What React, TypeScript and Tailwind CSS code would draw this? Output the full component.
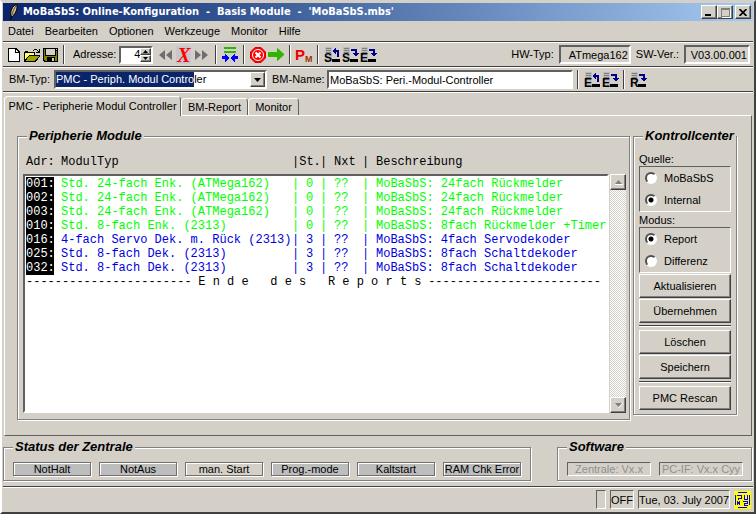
import React from 'react';

interface ModuleRow {
  adr: string;
  typ: string;
  status: string;
  next: string;
  text: string;
  color: string;
}

const GREEN = 'text-[#00ff00]';
const BLUE = 'text-[#0000e0]';

const modules: ModuleRow[] = [
  { adr: '001:', typ: 'Std. 24-fach Enk. (ATMega162)', status: '0', next: '??', text: 'MoBaSbS: 24fach Rückmelder', color: GREEN },
  { adr: '002:', typ: 'Std. 24-fach Enk. (ATMega162)', status: '0', next: '??', text: 'MoBaSbS: 24fach Rückmelder', color: GREEN },
  { adr: '003:', typ: 'Std. 24-fach Enk. (ATMega162)', status: '0', next: '??', text: 'MoBaSbS: 24fach Rückmelder', color: GREEN },
  { adr: '010:', typ: 'Std. 8-fach Enk. (2313)', status: '0', next: '??', text: 'MoBaSbS: 8fach Rückmelder +Timer', color: GREEN },
  { adr: '016:', typ: '4-fach Servo Dek. m. Rück (2313)', status: '3', next: '??', text: 'MoBaSbS: 4fach Servodekoder', color: BLUE },
  { adr: '025:', typ: 'Std. 8-fach Dek. (2313)', status: '3', next: '??', text: 'MoBaSbS: 8fach Schaltdekoder', color: BLUE },
  { adr: '032:', typ: 'Std. 8-fach Dek. (2313)', status: '3', next: '??', text: 'MoBaSbS: 8fach Schaltdekoder', color: BLUE },
];

const menus = ['Datei', 'Bearbeiten', 'Optionen', 'Werkzeuge', 'Monitor', 'Hilfe'];

const sunken = 'border border-t-[#606060] border-l-[#606060] border-r-white border-b-white';
const sunkenDeep = 'border-2 border-t-[#606060] border-l-[#606060] border-r-white border-b-white';
const raised = 'border border-t-white border-l-white border-r-[#404040] border-b-[#404040] shadow-[inset_-1px_-1px_0_#808080] bg-[#d4d0c8]';
const etched = 'border border-[#808080] shadow-[1px_1px_0_#fff,inset_1px_1px_0_#fff]';

const Rule = () => <div className="h-[2px] shrink-0 border-b border-white bg-[#404040]" />;
const Divider = ({ className = '' }: { className?: string }) => (
  <div className={`h-[19px] w-[2px] shrink-0 border-r border-white bg-[#404040] ${className}`} />
);

const GroupTitle = ({ children, className = '' }: { children: React.ReactNode; className?: string }) => (
  <h2 className={`-mt-[9px] w-fit bg-[#d4d0c8] px-[2px] text-[13px] leading-4 font-bold italic whitespace-nowrap ${className}`}>{children}</h2>
);

const ToolButton = ({ label, className = '', children }: { label: string; className?: string; children: React.ReactNode }) => (
  <button type="button" aria-label={label} className={`flex h-[18px] shrink-0 items-center justify-center ${className}`}>
    {children}
  </button>
);

const FeatherIcon = () => (
  <svg width="10" height="16" viewBox="0 0 10 16">
    <path d="M1.500 15.500 3 11" stroke="#000" strokeWidth="1.200" />
    <path d="M2 12C1 7 3 2 7.500 0.500 9 4 7 9 3.500 12.500Z" fill="#c8b890" stroke="#000" strokeWidth="1" />
    <path d="M3 11C4 7 5 4 7 2" stroke="#6a5220" fill="none" />
  </svg>
);

const NewIcon = () => (
  <svg width="12" height="14" viewBox="0 0 12 14" shapeRendering="crispEdges">
    <path d="M0 0h8l4 4v10H0z" fill="#000" />
    <path d="M1 1h6v4h4v8H1z" fill="#fff" />
    <path d="M8 2v2h2z" fill="#fff" />
  </svg>
);

const OpenIcon = () => (
  <svg width="17" height="14" viewBox="0 0 17 14" shapeRendering="crispEdges">
    <path d="M0 4h1V3h3v1h7v3h5v1l-4 6H0z" fill="#000" />
    <path d="M1 5h9v2H5l-4 5z" fill="#ffff66" />
    <path d="M5 8h10l-4 5H2z" fill="#a0a000" />
    <path d="M9 2h1V1h3v1h1v1h1V1h1v4h-4V4h2V3h-1V2h-3v1H9z" fill="#000" />
  </svg>
);

const SaveIcon = () => (
  <svg width="15" height="14" viewBox="0 0 15 14" shapeRendering="crispEdges">
    <path d="M0 0h15v14H1L0 13z" fill="#000" />
    <path d="M1 1h1v7h11V3h1v10h-2V9H4v4H2l-1-1z" fill="#808000" />
    <path d="M3 1h9v6H3zM13 1h1v1h-1zM9 10h2v3H9z" fill="#d4d0c8" />
  </svg>
);

const DoubleArrow = ({ flip = false }: { flip?: boolean }) => (
  <svg width="14" height="10" viewBox="0 0 14 10" className={flip ? '-scale-x-100' : ''}>
    <path d="M0 5 6 0v10zM7 5l6-5v10z" fill="#6e6e6e" />
  </svg>
);

const MergeIcon = () => (
  <svg width="16" height="15" viewBox="0 0 16 15" shapeRendering="crispEdges">
    <path d="M2 0h12v2H2zM2 4h12v2H2z" fill="#2fb400" />
    <path d="M0 9h3V7l5 4-5 4v-3H0zM16 9h-3V7l-5 4 5 4v-3h3z" fill="#0000ff" />
  </svg>
);

const StopIcon = () => (
  <svg width="16" height="16" viewBox="0 0 16 16">
    <path d="M5 0.500h6L15.500 5v6L11 15.500H5L0.500 11V5z" fill="#ff0000" stroke="#e00000" />
    <circle cx="8" cy="8" r="5.500" fill="none" stroke="#fff" />
    <path d="m5.500 5.500 5 5m0-5-5 5" stroke="#fff" strokeWidth="2.200" />
  </svg>
);

const GoIcon = () => (
  <svg width="17" height="13" viewBox="0 0 17 13">
    <path d="M0.500 4.500h9v-4l6.500 6-6.500 6v-4h-9z" fill="#2fb400" stroke="#2fb400" />
  </svg>
);

const PmIcon = () => (
  <svg width="17" height="16" viewBox="0 0 17 16" className="overflow-visible font-['Liberation_Sans']">
    <text x="-1" y="13" fontSize="15" fontWeight="bold" fill="#f00000">P</text>
    <text x="9" y="15" fontSize="9" fontWeight="bold" fill="#a03000">M</text>
  </svg>
);

// page with a letter, an arrow for the direction of the transfer and a bar below it
const TransferIcon = ({ letter, up = false }: { letter: string; up?: boolean }) => (
  <svg width="17" height="16" viewBox="0 0 17 16" className="overflow-visible font-['Liberation_Sans']">
    <g shapeRendering="crispEdges">
      <path d="M1 0h7v14H1z" fill="#bcbcbc" />
      <path d="M2 1.500h5M2 3.500h5M2 5.500h5" stroke="#808080" />
      {up ? (
        <path d="M8 4l4-4v3h3v7h-2V5h-1v3z" fill="#000090" />
      ) : (
        <path d="M9 2h6v4h2l-3 4-3-4h2V4H9z" fill="#000090" />
      )}
      <path d="M8 12h8v3H8z" fill="#000" />
    </g>
    <text x="0" y="15" fontSize="12" fontWeight="bold" fill="#000">{letter}</text>
  </svg>
);

const LinkIcon = () => (
  <svg width="17" height="18" viewBox="0 0 17 18" shapeRendering="crispEdges" className="shrink-0 bg-[#ffff00]">
    <path
      d="M4 1.500h9M4 16.500h9M1.500 4v10M15.500 4v10M3 4.500h4v3H4M4.500 7v2M10.500 4v4h3V4M3 10.500l3 3M6 10.500l-3 3M9 10.500h4v2h-3v2h4"
      stroke="#0000ff"
      fill="none"
    />
  </svg>
);

const ScrollArrow = ({ down = false }: { down?: boolean }) => (
  <button type="button" aria-label={down ? 'Nach unten' : 'Nach oben'} className={`flex h-4 items-center justify-center ${raised}`}>
    <svg width="9" height="6" viewBox="0 0 9 6" className={down ? 'rotate-180' : ''}>
      <path d="M1 5h7L4.500 1z" fill="#808080" />
      <path d={down ? 'M0 5 4.500 0' : 'M1 5.500h8'} stroke="#fff" />
    </svg>
  </button>
);

const Radio = ({ name, label, checked = false }: { name: string; label: string; checked?: boolean }) => (
  <label className="flex h-[22px] items-center gap-[7px] pl-[5px]">
    <input
      type="radio"
      name={name}
      defaultChecked={checked}
      className="size-3 appearance-none rounded-full border-2 border-t-[#505050] border-l-[#505050] border-r-white border-b-white bg-white checked:bg-[radial-gradient(circle,#000_2px,#fff_3px)]"
    />
    {label}
  </label>
);

const ControlButton = ({ children }: { children: React.ReactNode }) => (
  <button type="button" className={`h-6 w-full shrink-0 text-center ${raised}`}>{children}</button>
);

const Columns = () => (
  <colgroup>
    <col className="w-[28px]" />
    <col className="w-[238px]" />
    <col className="w-[14px]" />
    <col className="w-[14px]" />
    <col className="w-[14px]" />
    <col className="w-[28px]" />
    <col className="w-[14px]" />
    <col />
  </colgroup>
);

const PeripheryPanel = () => (
  <section className={`mr-[3px] flex min-w-0 flex-1 flex-col pb-[6px] pl-[5px] ${etched}`}>
    <GroupTitle className="ml-1">Peripherie Module</GroupTitle>
    <div className="mt-[11px] pr-[21px] pl-[3px]">
      <table className="w-full table-fixed font-['Liberation_Mono',monospace] text-[12px] leading-[14px] whitespace-pre">
        <Columns />
        <thead>
          <tr className="text-left [&>th]:p-0 [&>th]:font-normal">
            <th>Adr:</th>
            <th className="pl-[7px]!">ModulTyp</th>
            <th colSpan={2}>|St.</th>
            <th>|</th>
            <th>Nxt</th>
            <th>|</th>
            <th>Beschreibung</th>
          </tr>
        </thead>
      </table>
    </div>
    <div className="mt-[5px] flex min-h-0 flex-1">
      <div className={`min-w-0 flex-1 overflow-hidden bg-white pt-px pl-px ${sunkenDeep}`}>
        <table className="w-full table-fixed font-['Liberation_Mono',monospace] text-[12px] leading-[14px] whitespace-pre">
          <Columns />
          <tbody>
            {modules.map((m) => (
              <tr key={m.adr} className={`h-[14px] ${m.color} [&>td]:p-0`}>
                <td className="bg-black text-white">{m.adr}</td>
                <td className="pl-[7px]!">{m.typ}</td>
                <td>|</td>
                <td>{m.status}</td>
                <td>|</td>
                <td>{m.next}</td>
                <td>|</td>
                <td>{m.text}</td>
              </tr>
            ))}
          </tbody>
        </table>
        <div className="flex justify-between pr-[6px] font-['Liberation_Mono',monospace] text-[12px] leading-[14px] whitespace-pre">
          <span>{'-'.repeat(23)}</span>
          <span>E n d e   d e s   R e p o r t s</span>
          <span>{'-'.repeat(24)}</span>
        </div>
      </div>
      <div className="ml-px flex w-4 shrink-0 flex-col justify-between bg-[repeating-conic-gradient(#fff_0_25%,#d4d0c8_0_50%)] bg-[length:2px_2px]">
        <ScrollArrow />
        <ScrollArrow down />
      </div>
      <div className="w-[3px] shrink-0" />
    </div>
  </section>
);

const ControlPanel = () => (
  <section className={`flex w-[104px] shrink-0 flex-col self-start px-[5px] pb-1 ${etched}`}>
    <GroupTitle className="ml-[4px]">Kontrollcenter</GroupTitle>
    <span className="mt-[8px] leading-[14px]" id="quelle">Quelle:</span>
    <div role="radiogroup" aria-labelledby="quelle" className={`h-[46px] ${sunken}`}>
      <Radio name="quelle" label="MoBaSbS" />
      <Radio name="quelle" label="Internal" checked />
    </div>
    <span className="mt-px leading-[14px]" id="modus">Modus:</span>
    <div role="radiogroup" aria-labelledby="modus" className={`h-[46px] ${sunken}`}>
      <Radio name="modus" label="Report" checked />
      <Radio name="modus" label="Differenz" />
    </div>
    <div className="flex flex-col gap-px pt-px">
      <ControlButton>Aktualisieren</ControlButton>
      <ControlButton>Übernehmen</ControlButton>
      <div className="mt-px mb-[2px]"><Rule /></div>
      <ControlButton>Löschen</ControlButton>
      <ControlButton>Speichern</ControlButton>
      <div className="mt-px mb-[2px]"><Rule /></div>
      <ControlButton>PMC Rescan</ControlButton>
    </div>
  </section>
);

const StatusLamp = ({ children, className = 'bg-[#bdbdbd]' }: { children: React.ReactNode; className?: string }) => (
  <div className={`h-[14px] w-[78px] overflow-hidden border border-[#707070] text-center leading-3 whitespace-nowrap shadow-[1px_1px_0_#fff,inset_1px_1px_0_#fff] ${className}`}>
    {children}
  </div>
);

const App: React.FC = () => (
  <div className="flex min-h-screen flex-col border-2 border-t-[#d4d0c8] border-r-[#404040] border-b-[#404040] border-l-white bg-[#d4d0c8] p-px font-['Liberation_Sans',sans-serif] text-[11px] text-black">
    <header className="flex h-[18px] shrink-0 items-center bg-linear-to-r from-[#0a246a] to-[#a6caf0] pr-[2px] pl-[6px]">
      <FeatherIcon />
      <h1 className="ml-1 flex-1 font-['DejaVu_Sans_Condensed','DejaVu_Sans',sans-serif] text-[11px] font-bold whitespace-pre text-white">
        MoBaSbS: Online-Konfiguration  -  Basis Module  -  'MoBaSbS.mbs'
      </h1>
      <button type="button" aria-label="Minimieren" className={`flex h-[14px] w-4 items-end pb-[2px] pl-[3px] ${raised}`}>
        <span className="h-[2px] w-[6px] bg-black" />
      </button>
      <button type="button" aria-label="Maximieren" className={`flex h-[14px] w-4 items-center justify-center ${raised}`}>
        <span className="h-[9px] w-[9px] border border-t-2 border-[#808080] shadow-[1px_1px_0_#fff]" />
      </button>
      <button type="button" aria-label="Schließen" className={`ml-[2px] flex h-[14px] w-4 items-center justify-center ${raised}`}>
        <svg width="8" height="7" viewBox="0 0 8 7"><path d="m0.500 0 7 7m0-7-7 7" stroke="#000" strokeWidth="1.700" /></svg>
      </button>
    </header>

    <nav className="flex h-5 shrink-0 items-center gap-[11px] pl-[5px]">
      {menus.map((m) => (
        <button type="button" key={m}>{m}</button>
      ))}
    </nav>
    <Rule />

    <div className="flex h-[23px] shrink-0 items-center pr-[3px] pl-[5px]">
      <ToolButton label="Neu"><NewIcon /></ToolButton>
      <ToolButton label="Öffnen" className="ml-1"><OpenIcon /></ToolButton>
      <ToolButton label="Speichern" className="ml-[2px]"><SaveIcon /></ToolButton>
      <Divider className="ml-[5px]" />
      <label htmlFor="adresse" className="ml-2">Adresse:</label>
      <div className={`ml-[3px] flex h-[18px] w-[34px] bg-white ${sunkenDeep}`}>
        <input id="adresse" defaultValue="4" className="w-[19px] text-right" />
        <div className="flex w-[11px] flex-col">
          <button type="button" aria-label="Erhöhen" className={`flex flex-1 items-center justify-center ${raised}`}>
            <svg width="5" height="3" viewBox="0 0 5 3"><path d="M0 3h5L2.500 0z" /></svg>
          </button>
          <button type="button" aria-label="Verringern" className={`flex flex-1 items-center justify-center ${raised}`}>
            <svg width="5" height="3" viewBox="0 0 5 3"><path d="M0 0h5L2.500 3z" /></svg>
          </button>
        </div>
      </div>
      <ToolButton label="Zurück" className="ml-[6px]"><DoubleArrow /></ToolButton>
      <ToolButton label="Abbrechen" className="ml-[3px] w-[15px] bg-[#c6c6cc]">
        <span className="font-['Liberation_Serif',serif] text-[20px] leading-4 font-bold text-[#ff0000] italic">X</span>
      </ToolButton>
      <ToolButton label="Vor" className="ml-[3px]"><DoubleArrow flip /></ToolButton>
      <Divider className="ml-[7px]" />
      <ToolButton label="Abgleich" className="ml-[5px]"><MergeIcon /></ToolButton>
      <Divider className="ml-[5px]" />
      <ToolButton label="Stopp" className="ml-[5px]"><StopIcon /></ToolButton>
      <ToolButton label="Start" className="ml-[2px]"><GoIcon /></ToolButton>
      <Divider className="ml-[4px]" />
      <ToolButton label="Programmiermodus" className="ml-[5px]"><PmIcon /></ToolButton>
      <Divider className="ml-[4px]" />
      <ToolButton label="S laden" className="ml-[5px]"><TransferIcon letter="S" up /></ToolButton>
      <ToolButton label="S schreiben" className="ml-px"><TransferIcon letter="S" /></ToolButton>
      <ToolButton label="E schreiben" className="ml-px"><TransferIcon letter="E" /></ToolButton>
      <span className="ml-auto">HW-Typ:</span>
      <output className={`ml-[5px] h-[19px] w-[72px] pr-px text-right leading-4 ${sunkenDeep}`}>ATmega162</output>
      <span className="ml-[5px]">SW-Ver.:</span>
      <output className={`ml-[5px] h-[19px] w-[66px] pr-px text-right leading-4 ${sunkenDeep}`}>V03.00.001</output>
    </div>
    <Rule />

    <div className="flex h-[23px] shrink-0 items-center pl-[6px]">
      <label htmlFor="bmtyp" className="w-[45px]">BM-Typ:</label>
      <div className={`relative flex h-[19px] w-[213px] bg-white ${sunkenDeep}`}>
        <select id="bmtyp" className="w-full appearance-none text-transparent">
          <option>PMC - Periph. Modul Controller</option>
        </select>
        <div aria-hidden="true" className="pointer-events-none absolute inset-0 flex items-center">
          <span className="bg-[#0a246a] leading-[15px] text-white">PMC - Periph. Modul Contro</span>
          <span>ler</span>
          <span className={`ml-auto flex h-full w-[15px] items-center justify-center ${raised}`}>
            <svg width="7" height="4" viewBox="0 0 7 4"><path d="M0 0h7L3.500 4z" /></svg>
          </span>
        </div>
      </div>
      <label htmlFor="bmname" className="ml-[5px] w-[55px]">BM-Name:</label>
      <input id="bmname" defaultValue="MoBaSbS: Peri.-Modul-Controller" className={`h-[19px] w-[246px] bg-white pl-px ${sunkenDeep}`} />
      <Divider className="ml-[4px]" />
      <ToolButton label="E laden" className="ml-[5px]"><TransferIcon letter="E" up /></ToolButton>
      <ToolButton label="E schreiben" className="ml-px"><TransferIcon letter="E" /></ToolButton>
      <Divider className="ml-[4px]" />
      <ToolButton label="R schreiben" className="ml-[5px]"><TransferIcon letter="R" /></ToolButton>
    </div>
    <Rule />

    <main className="flex flex-1 flex-col pt-[3px] pr-px pl-px">
      <div role="tablist" className="flex items-end whitespace-nowrap">
        <button type="button" role="tab" aria-selected="true" className="z-10 -mb-px h-5 w-[177px] rounded-t-sm border border-t-white border-r-[#606060] border-b-0 border-l-white bg-[#d4d0c8]">
          PMC - Peripherie Modul Controller
        </button>
        <button type="button" role="tab" aria-selected="false" className="h-[17px] w-[67px] rounded-t-sm border border-t-white border-r-[#606060] border-b-0 border-l-white">BM-Report</button>
        <button type="button" role="tab" aria-selected="false" className="h-[17px] w-[51px] rounded-t-sm border border-t-white border-r-[#606060] border-b-0 border-l-white">Monitor</button>
      </div>
      <div role="tabpanel" className="flex flex-1 border border-t-white border-r-[#606060] border-b-[#606060] border-l-white pt-5 pr-[14px] pb-[15px] pl-3">
        <PeripheryPanel />
        <ControlPanel />
      </div>
    </main>

    <div className="mt-[11px] mb-[5px] flex shrink-0 justify-between pr-px">
      <section className={`h-[34px] w-[528px] pl-[9px] ${etched}`}>
        <GroupTitle>Status der Zentrale</GroupTitle>
        <div className="mt-[7px] flex gap-2">
          <StatusLamp>NotHalt</StatusLamp>
          <StatusLamp>NotAus</StatusLamp>
          <StatusLamp className="bg-[#d4d0c8]">man. Start</StatusLamp>
          <StatusLamp>Prog.-mode</StatusLamp>
          <StatusLamp>Kaltstart</StatusLamp>
          <StatusLamp>RAM Chk Error</StatusLamp>
        </div>
      </section>
      <section className={`h-[34px] w-[195px] pl-[9px] ${etched}`}>
        <GroupTitle>Software</GroupTitle>
        <div className="mt-[7px] flex gap-2 text-center leading-3 whitespace-nowrap text-[#909090]">
          <div className={`h-[14px] w-[84px] ${sunken}`}>Zentrale: Vx.x</div>
          <div className={`h-[14px] w-[84px] ${sunken}`}>PC-IF: Vx.x Cyy</div>
        </div>
      </section>
    </div>
    <Rule />

    <footer className="flex h-[23px] shrink-0 items-center justify-end gap-1 pr-[2px]">
      <div className={`h-[19px] w-[10px] ${sunken}`} />
      <div className={`h-[19px] w-6 text-center leading-[18px] ${sunken}`}>OFF</div>
      <div className={`h-[19px] w-[92px] text-center leading-[18px] whitespace-nowrap ${sunken}`}>Tue, 03. July 2007</div>
      <LinkIcon />
    </footer>
  </div>
);

export default App;
